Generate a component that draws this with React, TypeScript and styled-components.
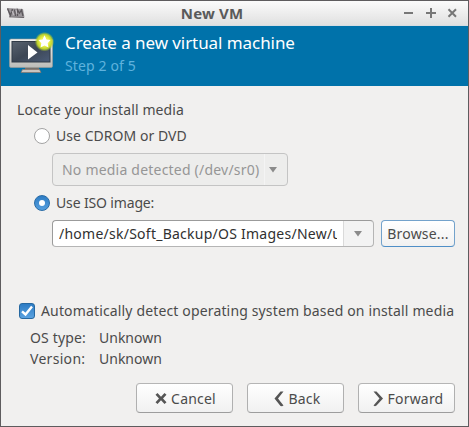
import React from "react";
import styled, { createGlobalStyle } from "styled-components";

const GlobalStyle = createGlobalStyle`
  * { box-sizing: border-box; }
  body {
    margin: 0;
    overflow: hidden;
    font-family: "Noto Sans", "Open Sans", sans-serif;
    font-size: 14px;
    line-height: 20px;
    color: #4b4b4b;
    white-space: nowrap;
  }
`;

const Window = styled.div`
  width: 469px;
  height: 427px;
  display: flex;
  flex-direction: column;
  border: 1px solid #5e5c5e;
  background: #f1f0ef;
`;

const TitleBar = styled.div`
  display: grid;
  grid-template-columns: 40px 1fr 82px;
  align-items: center;
  height: 25px;
  flex: none;
  padding: 0 9px 0 6px;
  background: linear-gradient(#fbfbfb, #e0e0e0);
  border-bottom: 1px solid #d5dde2;
`;

const WindowTitle = styled.div`
  text-align: center;
  font-size: 15px;
  font-weight: 700;
  letter-spacing: 0.15px;
  color: #5a5a5a;
`;

const WindowControls = styled.div`
  display: flex;
  justify-content: flex-end;
`;

const Banner = styled.header`
  display: flex;
  height: 60px;
  flex: none;
  padding: 6px 0 0 7px;
  background: #0072aa;
`;

const BannerText = styled.div`
  padding-left: 9px;
`;

const BannerTitle = styled.div`
  font-size: 17px;
  line-height: 22px;
  height: 24px;
  letter-spacing: -0.07px;
  color: #fff;
`;

const BannerStep = styled.div`
  letter-spacing: 0.13px;
  color: #5fb2dd;
`;

const Content = styled.main`
  display: flex;
  flex-direction: column;
  padding: 14px 13px 0 16px;
`;

const Label = styled.div<{ $spacing?: number }>`
  letter-spacing: ${(p) => p.$spacing ?? 0.15}px;
`;

const OptionRow = styled.label<{ $top: number }>`
  display: flex;
  align-items: center;
  gap: 6px;
  height: 20px;
  margin: ${(p) => p.$top}px 0 0 17px;
`;

const Radio = styled.span<{ $checked?: boolean }>`
  display: grid;
  place-items: center;
  width: 16px;
  height: 16px;
  border: 1px solid ${(p) => (p.$checked ? "#286ba6" : "#a3a3a3")};
  border-radius: 50%;
  background: ${(p) => (p.$checked ? "linear-gradient(#2d7cc4, #569fdf)" : "#fff")};

  &::after {
    content: "";
    width: 6px;
    height: 6px;
    border-radius: 50%;
    background: #fff;
  }
`;

const DisabledCombo = styled.div`
  display: flex;
  align-items: center;
  width: 236px;
  height: 33px;
  margin: 7px 0 0 35px;
  padding-left: 9px;
  border: 1px solid #c4c4c4;
  border-radius: 4px;
  background: #ededec;
  color: #969696;
`;

const ComboText = styled.span`
  width: 202px;
  letter-spacing: 0.21px;
`;

const ComboArrow = styled.span<{ $width: number; $line: string }>`
  display: grid;
  place-items: center;
  width: ${(p) => p.$width}px;
  align-self: stretch;
  border-left: 1px solid ${(p) => p.$line};
`;

const MediaRow = styled.div`
  display: flex;
  justify-content: space-between;
  height: 27px;
  margin: 7px 0 0 35px;
`;

const Entry = styled.div`
  display: flex;
  width: 322px;
  border: 1px solid #b5b5b5;
  border-top-color: #9b9b9b;
  border-left-color: #9b9b9b;
  border-radius: 4px;
  background: linear-gradient(90deg, #fff 290px, #f3f3f3 290px);
`;

const EntryText = styled.span`
  width: 278px;
  margin: 3px 6px 0;
  overflow: hidden;
  letter-spacing: 0.25px;
  color: #303030;
`;

const Button = styled.button<{ $width: number; $focus?: boolean }>`
  display: flex;
  align-items: center;
  justify-content: center;
  gap: 4px;
  width: ${(p) => p.$width}px;
  padding: ${(p) => (p.$focus ? "0" : "1px 0 0 2px")};
  border: 1px solid;
  border-color: ${(p) => (p.$focus ? "#73a2cb #73a2cb #4f8fc7" : "#b5b5b5 #b0b0b0 #9d9d9d")};
  border-radius: 4px;
  background: linear-gradient(#fff, #f1f1f1);
  font: inherit;
  letter-spacing: 0.2px;
  color: #4b4b4b;
`;

const CheckRow = styled.label`
  display: flex;
  align-items: center;
  gap: 6px;
  height: 20px;
  margin: 54px 0 0 2px;
`;

const CheckBox = styled.span`
  display: grid;
  place-items: center;
  width: 16px;
  height: 16px;
  flex: none;
  border: 1px solid #2668a1;
  border-radius: 3px;
  background: linear-gradient(#2d7cc4, #5aa2e0);
`;

const Details = styled.div`
  display: grid;
  grid-template-columns: 69px auto;
  row-gap: 1px;
  margin: 7px 0 0 13px;
`;

const Actions = styled.footer`
  display: flex;
  justify-content: flex-end;
  gap: 14px;
  height: 30px;
  margin-top: 14px;
`;

const AppGlyph = () => (
  <svg width="18" height="12" viewBox="0 0 18 12">
    <path d="M0 1L16 2L17.500 10.500L2.500 9.500Z" fill="#9a969a" />
    <path d="M0.500 1.500L3.500 8.500L5.500 2M7.500 2.500L8.500 9M10.500 9L10.500 3L12.500 6L14.500 3L16 9" fill="none" stroke="#5b575b" strokeWidth="1.300" />
    <path d="M5 4L7 8M9 3L10 7" stroke="#c8c4c8" />
    <path d="M2 9.800L17 10.500" stroke="#686468" />
  </svg>
);

const ControlGlyphs = () => (
  <svg width="56" height="14" viewBox="0 0 56 14" fill="none" stroke="#777" strokeWidth="2">
    <path d="M1 7H10M23 7H33M28 2V12" />
    <path d="M45.500 3.200L53 10.800M53 3.200L45.500 10.800" />
  </svg>
);

const MonitorGlyph = () => (
  <svg width="48" height="44" viewBox="0 0 48 44">
    <defs>
      <linearGradient id="screen" x1="0" y1="0" x2="1" y2="1">
        <stop offset="0" stopColor="#59636f" />
        <stop offset=".5" stopColor="#3c4654" />
        <stop offset="1" stopColor="#4b5c78" />
      </linearGradient>
      <linearGradient id="frame" x1="0" y1="0" x2="0" y2="1">
        <stop offset="0" stopColor="#f2f2f0" />
        <stop offset="1" stopColor="#bcbcb8" />
      </linearGradient>
      <radialGradient id="glow">
        <stop offset=".45" stopColor="#eef24a" />
        <stop offset=".75" stopColor="#c3d62a" stopOpacity=".95" />
        <stop offset="1" stopColor="#a9c92a" stopOpacity="0" />
      </radialGradient>
    </defs>
    <path d="M17 35H31V38H17Z" fill="#77716b" />
    <path d="M14.500 37.500H31.500L33 40.500H13Z" fill="#c9c4bf" stroke="#857468" strokeWidth=".7" />
    <rect x="1.500" y="7" width="43" height="28.500" rx="1.500" fill="url(#frame)" stroke="#9c9c98" strokeWidth=".6" />
    <rect x="4" y="9.500" width="38" height="20.500" fill="url(#screen)" stroke="#303a46" />
    <path d="M20 13V27.500L29.500 20.500Z" fill="#fff" />
    <circle cx="36.500" cy="9.700" r="9.800" fill="url(#glow)" />
    <path d="M36.500 3.200L38.500 7.500L42.500 8L39.700 11.200L40.500 15.600L36.500 13.500L32.500 15.600L33.300 11.200L30.500 8L34.500 7.500Z" fill="#fff" />
  </svg>
);

const ArrowGlyph = () => (
  <svg width="8" height="6" viewBox="0 0 8 6">
    <path d="M0 0H8L4 5.500Z" fill="#8b8b8b" />
  </svg>
);

const CheckGlyph = () => (
  <svg width="12" height="12" viewBox="0 0 12 12">
    <path d="M1 6.300L4.500 9.500L11 1.500" fill="none" stroke="#fff" strokeWidth="2.400" />
  </svg>
);

const ActionGlyph = ({ d }: { d: string }) => (
  <svg width="12" height="16" viewBox="0 0 12 16">
    <path d={d} fill="#555" />
  </svg>
);

export default function App() {
  return (
    <>
      <GlobalStyle />
      <Window>
        <TitleBar>
          <AppGlyph />
          <WindowTitle>New VM</WindowTitle>
          <WindowControls>
            <ControlGlyphs />
          </WindowControls>
        </TitleBar>
        <Banner>
          <MonitorGlyph />
          <BannerText>
            <BannerTitle>Create a new virtual machine</BannerTitle>
            <BannerStep>Step 2 of 5</BannerStep>
          </BannerText>
        </Banner>
        <Content>
          <Label $spacing={0.1}>Locate your install media</Label>
          <OptionRow $top={6}>
            <Radio />
            <Label $spacing={0.04}>Use CDROM or DVD</Label>
          </OptionRow>
          <DisabledCombo>
            <ComboText>No media detected (/dev/sr0)</ComboText>
            <ComboArrow $width={17} $line="#f4f4f4">
              <ArrowGlyph />
            </ComboArrow>
          </DisabledCombo>
          <OptionRow $top={7}>
            <Radio $checked />
            <Label $spacing={-0.15}>Use ISO image:</Label>
          </OptionRow>
          <MediaRow>
            <Entry>
              <EntryText>/home/sk/Soft_Backup/OS Images/New/u</EntryText>
              <ComboArrow $width={29} $line="#dadada">
                <ArrowGlyph />
              </ComboArrow>
            </Entry>
            <Button $width={74} $focus>Browse...</Button>
          </MediaRow>
          <CheckRow>
            <CheckBox>
              <CheckGlyph />
            </CheckBox>
            <Label $spacing={0.15}>Automatically detect operating system based on install media</Label>
          </CheckRow>
          <Details>
            <Label>OS type:</Label>
            <Label $spacing={0}>Unknown</Label>
            <Label $spacing={0.3}>Version:</Label>
            <Label $spacing={0}>Unknown</Label>
          </Details>
          <Actions>
            <Button $width={97}>
              <ActionGlyph d="M.5 3.700L2.500 2L6 5.800L9.500 2L11.500 3.700L8 7.500L11.500 11.300L9.500 13L6 9.200L2.500 13L.5 11.300L4 7.500Z" />
              Cancel
            </Button>
            <Button $width={97}>
              <ActionGlyph d="M10.500 .5L5 7.500L10.500 14.500L9 15.200L7.500 15L1.500 7.500L7.500 .5Z" />
              Back
            </Button>
            <Button $width={97}>
              <ActionGlyph d="M1.500 .5L4.500 .5L11 7.500L4.500 14.500L3 15.200L1.500 14.500L7.500 7.500Z" />
              Forward
            </Button>
          </Actions>
        </Content>
      </Window>
    </>
  );
}
